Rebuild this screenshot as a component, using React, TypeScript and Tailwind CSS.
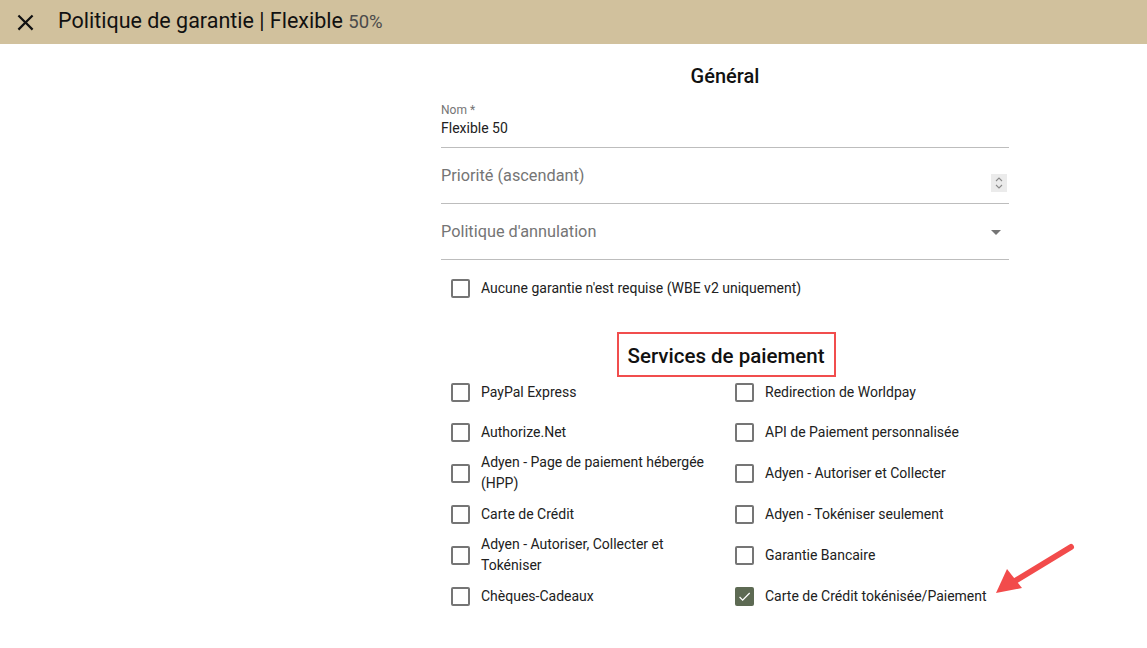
import React from "react";

type Option = { label: string; checked?: boolean };

const rows: [Option, Option][] = [
  [{ label: "PayPal Express" }, { label: "Redirection de Worldpay" }],
  [{ label: "Authorize.Net" }, { label: "API de Paiement personnalisée" }],
  [{ label: "Adyen - Page de paiement hébergée (HPP)" }, { label: "Adyen - Autoriser et Collecter" }],
  [{ label: "Carte de Crédit" }, { label: "Adyen - Tokéniser seulement" }],
  [{ label: "Adyen - Autoriser, Collecter et Tokéniser" }, { label: "Garantie Bancaire" }],
  [{ label: "Chèques-Cadeaux" }, { label: "Carte de Crédit tokénisée/Paiement", checked: true }],
];

function Checkbox({ checked }: { checked?: boolean }) {
  if (checked) {
    return (
      <span className="flex h-[19px] w-[19px] shrink-0 items-center justify-center rounded-[2px] bg-[#5d6a53]">
        <svg width="15" height="15" viewBox="0 0 24 24">
          <path d="M9 16.2 4.8 12l-1.4 1.4L9 19 21 7l-1.4-1.4z" fill="#fff" />
        </svg>
      </span>
    );
  }
  return <span className="h-[19px] w-[19px] shrink-0 rounded-[2px] border-2 border-[#757575]" />;
}

function CheckItem({ label, checked }: Option) {
  return (
    <label className="flex min-h-[40px] items-center gap-[11px] pl-[10px] pr-4">
      <Checkbox checked={checked} />
      <span className="text-[14px] leading-[21px] text-[#212121]">{label}</span>
    </label>
  );
}

export default function App() {
  return (
    <div className="relative min-h-screen bg-white font-['Roboto',sans-serif]">
      <header className="flex h-[44px] items-center bg-[#d1c19d]">
        <button className="ml-[12px] flex h-[27px] w-[27px] items-center justify-center">
          <svg width="27" height="27" viewBox="0 0 24 24">
            <path
              d="M19 6.41 17.59 5 12 10.59 6.41 5 5 6.41 10.59 12 5 17.59 6.41 19 12 13.41 17.59 19 19 17.59 13.41 12z"
              fill="#111"
            />
          </svg>
        </button>
        <h1 className="ml-[19px] pb-[2px] text-[21.5px] leading-none text-[#111]">
          Politique de garantie | Flexible <span className="text-[18.5px] text-[#4b4b4b]">50%</span>
        </h1>
      </header>

      <main className="ml-[441px] w-[568px] pt-[20px]">
        <h2 className="text-center text-[20px] font-medium leading-[24px] text-[#111]">Général</h2>

        <div className="mt-[4px] h-[56px] border-b border-[#bdbdbd] pt-[10px]">
          <div className="text-[12px] leading-[16px] text-[#757575]">Nom *</div>
          <div className="text-[14px] leading-[20px] text-[#212121]">Flexible 50</div>
        </div>

        <div className="flex h-[56px] items-center justify-between border-b border-[#bdbdbd] pt-[2px]">
          <span className="text-[16.3px] text-[#757575]">Priorité (ascendant)</span>
          <span className="mr-[2px] mt-[12px] flex h-[18px] w-[16px] flex-col items-center justify-center bg-[#ebebeb]">
            <svg width="10" height="14" viewBox="0 0 10 14">
              <path d="M2 5 5 2l3 3M2 9l3 3 3-3" fill="none" stroke="#8a8a8a" strokeWidth="1.1" />
            </svg>
          </span>
        </div>

        <div className="flex h-[56px] items-center justify-between border-b border-[#bdbdbd] pt-[2px]">
          <span className="text-[16.3px] text-[#757575]">Politique d'annulation</span>
          <svg width="10" height="5" viewBox="0 0 10 5" className="mr-[8px]">
            <path d="M0 0h10L5 5z" fill="#757575" />
          </svg>
        </div>

        <div className="mt-[8px]">
          <CheckItem label="Aucune garantie n'est requise (WBE v2 uniquement)" />
        </div>

        <div className="mt-[24px] flex justify-center">
          <h2 className="ml-[3px] border-2 border-[#f14d4d] pl-[8px] pr-[9px] pt-[10px] pb-[6px] text-[20.5px] font-medium leading-[25px] text-[#111]">
            Services de paiement
          </h2>
        </div>

        <div className="-mt-[5px] grid grid-cols-2">
          {rows.map(([a, b], i) => (
            <React.Fragment key={i}>
              <CheckItem {...a} />
              <CheckItem {...b} />
            </React.Fragment>
          ))}
        </div>
      </main>

      <svg className="absolute left-[990px] top-[540px]" width="90" height="60" viewBox="0 0 90 60">
        <path d="M81 7 25 41" stroke="#f24b4b" strokeWidth="6" strokeLinecap="round" />
        <path d="M6 53 17 29 32 48z" fill="#f24b4b" />
      </svg>
    </div>
  );
}
